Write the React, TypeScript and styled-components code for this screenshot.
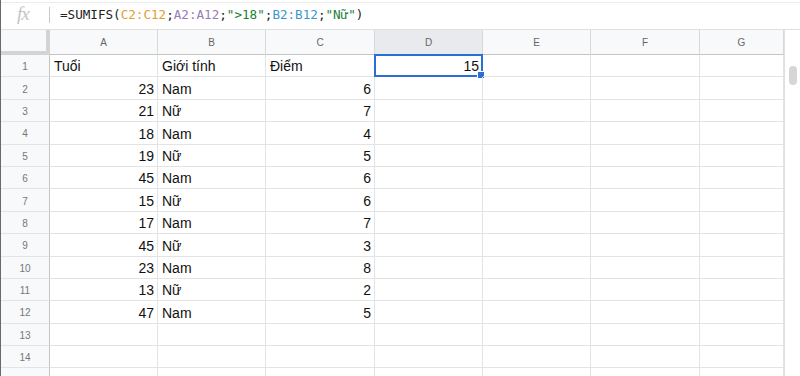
import React from "react"
import styled, { createGlobalStyle } from "styled-components"

const GlobalStyle = createGlobalStyle`
  html, body {
    margin: 0;
    padding: 0;
    background: #fff;
    overflow: hidden;
  }
  body {
    font-family: "Liberation Sans", Arial, sans-serif;
  }
`

const COLS = ["A", "B", "C", "D", "E", "F", "G"]
const WIDTHS = [108, 108, 109, 108, 108, 109, 84]

const DATA: (string | number)[][] = [
  ["Tuổi", "Giới tính", "Điểm", 15],
  [23, "Nam", 6],
  [21, "Nữ", 7],
  [18, "Nam", 4],
  [19, "Nữ", 5],
  [45, "Nam", 6],
  [15, "Nữ", 6],
  [17, "Nam", 7],
  [45, "Nữ", 3],
  [23, "Nam", 8],
  [13, "Nữ", 2],
  [47, "Nam", 5],
]

const Page = styled.div`
  width: 800px;
  height: 376px;
  display: flex;
  flex-direction: column;
  overflow: hidden;
  border-left: 1px solid #6a6a6a;
  box-sizing: border-box;
`

const FormulaBar = styled.div`
  height: 28px;
  box-sizing: border-box;
  border-top: 1px solid #ececec;
  margin-top: 2px;
  border-bottom: 1px solid #e0e0e0;
  display: flex;
  align-items: center;
  flex-shrink: 0;
`

const FxLabel = styled.span`
  width: 48px;
  padding-left: 16px;
  box-sizing: border-box;
  font-family: "Liberation Serif", "Times New Roman", serif;
  font-style: italic;
  font-size: 19px;
  color: #c4c4c4;
  letter-spacing: -1px;
  margin-top: -4px;
`

const Divider = styled.span`
  width: 1px;
  height: 16px;
  background: #c8c8c8;
  margin-top: -2px;
`

const FormulaText = styled.span`
  margin-left: 10px;
  margin-top: -3px;
  font-family: "DejaVu Sans Mono", "Liberation Mono", monospace;
  font-size: 12.6px;
  color: #222;
  white-space: pre;
`

const Ref = styled.span<{ $color: string }>`
  color: ${p => p.$color};
`

const Sheet = styled.div`
  flex: 1;
  display: flex;
  min-height: 0;
`

const Grid = styled.div`
  width: 783px;
  display: grid;
  grid-template-columns: 49px ${WIDTHS.map(w => `${w}px`).join(" ")};
  grid-auto-rows: 22.4px;
  grid-template-rows: 25px;
  overflow: hidden;
  align-content: start;
`

const Corner = styled.div`
  background: #f8f9fa;
  border-right: 4px solid #d4d4d4;
  border-bottom: 4px solid #d4d4d4;
  box-sizing: border-box;
`

const ColHeader = styled.div<{ $active?: boolean }>`
  background: ${p => (p.$active ? "#e8eaed" : "#f8f9fa")};
  border-right: 1px solid #d8d8d8;
  border-bottom: 1px solid #c4c4c4;
  box-sizing: border-box;
  display: flex;
  align-items: center;
  justify-content: center;
  font-size: 10px;
  color: #666;
  padding-top: 1px;
`

const RowHeader = styled.div`
  background: #f8f9fa;
  border-right: 1px solid #c4c4c4;
  border-bottom: 1px solid #e2e3e3;
  box-sizing: border-box;
  display: flex;
  align-items: center;
  justify-content: center;
  font-size: 10px;
  color: #777;
  padding-top: 2px;
`

const Cell = styled.div<{ $num?: boolean }>`
  position: relative;
  border-right: 1px solid #e2e3e3;
  border-bottom: 1px solid #e2e3e3;
  box-sizing: border-box;
  display: flex;
  align-items: flex-end;
  justify-content: ${p => (p.$num ? "flex-end" : "flex-start")};
  padding: 0 3px 1px 4px;
  font-size: 14px;
  line-height: 18px;
  color: #111;
  white-space: nowrap;
  overflow: visible;
`

const Selection = styled.div`
  position: absolute;
  left: -1px;
  top: -1px;
  right: -1px;
  bottom: -1px;
  border: 2px solid #2a6fd6;
  pointer-events: none;
`

const Handle = styled.div`
  position: absolute;
  right: -4px;
  bottom: -4px;
  width: 6px;
  height: 6px;
  background: #2a6fd6;
  border: 1px solid #fff;
`

const Scrollbar = styled.div`
  width: 16px;
  border-left: 1px solid #e0e0e0;
  box-sizing: border-box;
  background: #fff;
  padding-top: 36px;
  display: flex;
  justify-content: center;
`

const Thumb = styled.div`
  width: 8px;
  height: 19px;
  border-radius: 4px;
  background: #d6d6d6;
`

const App = () => {
  const visibleRows = 14
  return (
    <>
      <GlobalStyle />
      <Page>
        <FormulaBar>
          <FxLabel>fx</FxLabel>
          <Divider />
          <FormulaText>
            =SUMIFS(<Ref $color="#e0a030">C2:C12</Ref>;
            <Ref $color="#9a7bb5">A2:A12</Ref>;
            <Ref $color="#188038">"&gt;18"</Ref>;
            <Ref $color="#3a97c9">B2:B12</Ref>;
            <Ref $color="#188038">"Nữ"</Ref>)
          </FormulaText>
        </FormulaBar>
        <Sheet>
          <Grid>
            <Corner />
            {COLS.map(c => (
              <ColHeader key={c} $active={c === "D"}>
                {c}
              </ColHeader>
            ))}
            {Array.from({ length: visibleRows + 1 }).map((_, r) => (
              <React.Fragment key={r}>
                {/* the last row is only a sliver at the window edge */}
                <RowHeader>{r < visibleRows ? r + 1 : null}</RowHeader>
                {COLS.map((c, ci) => {
                  const v = DATA[r]?.[ci]
                  const selected = r === 0 && ci === 3
                  return (
                    <Cell key={c} $num={typeof v === "number"}>
                      {v}
                      {selected && (
                        <Selection>
                          <Handle />
                        </Selection>
                      )}
                    </Cell>
                  )
                })}
              </React.Fragment>
            ))}
          </Grid>
          <Scrollbar>
            <Thumb />
          </Scrollbar>
        </Sheet>
      </Page>
    </>
  )
}

export default App
